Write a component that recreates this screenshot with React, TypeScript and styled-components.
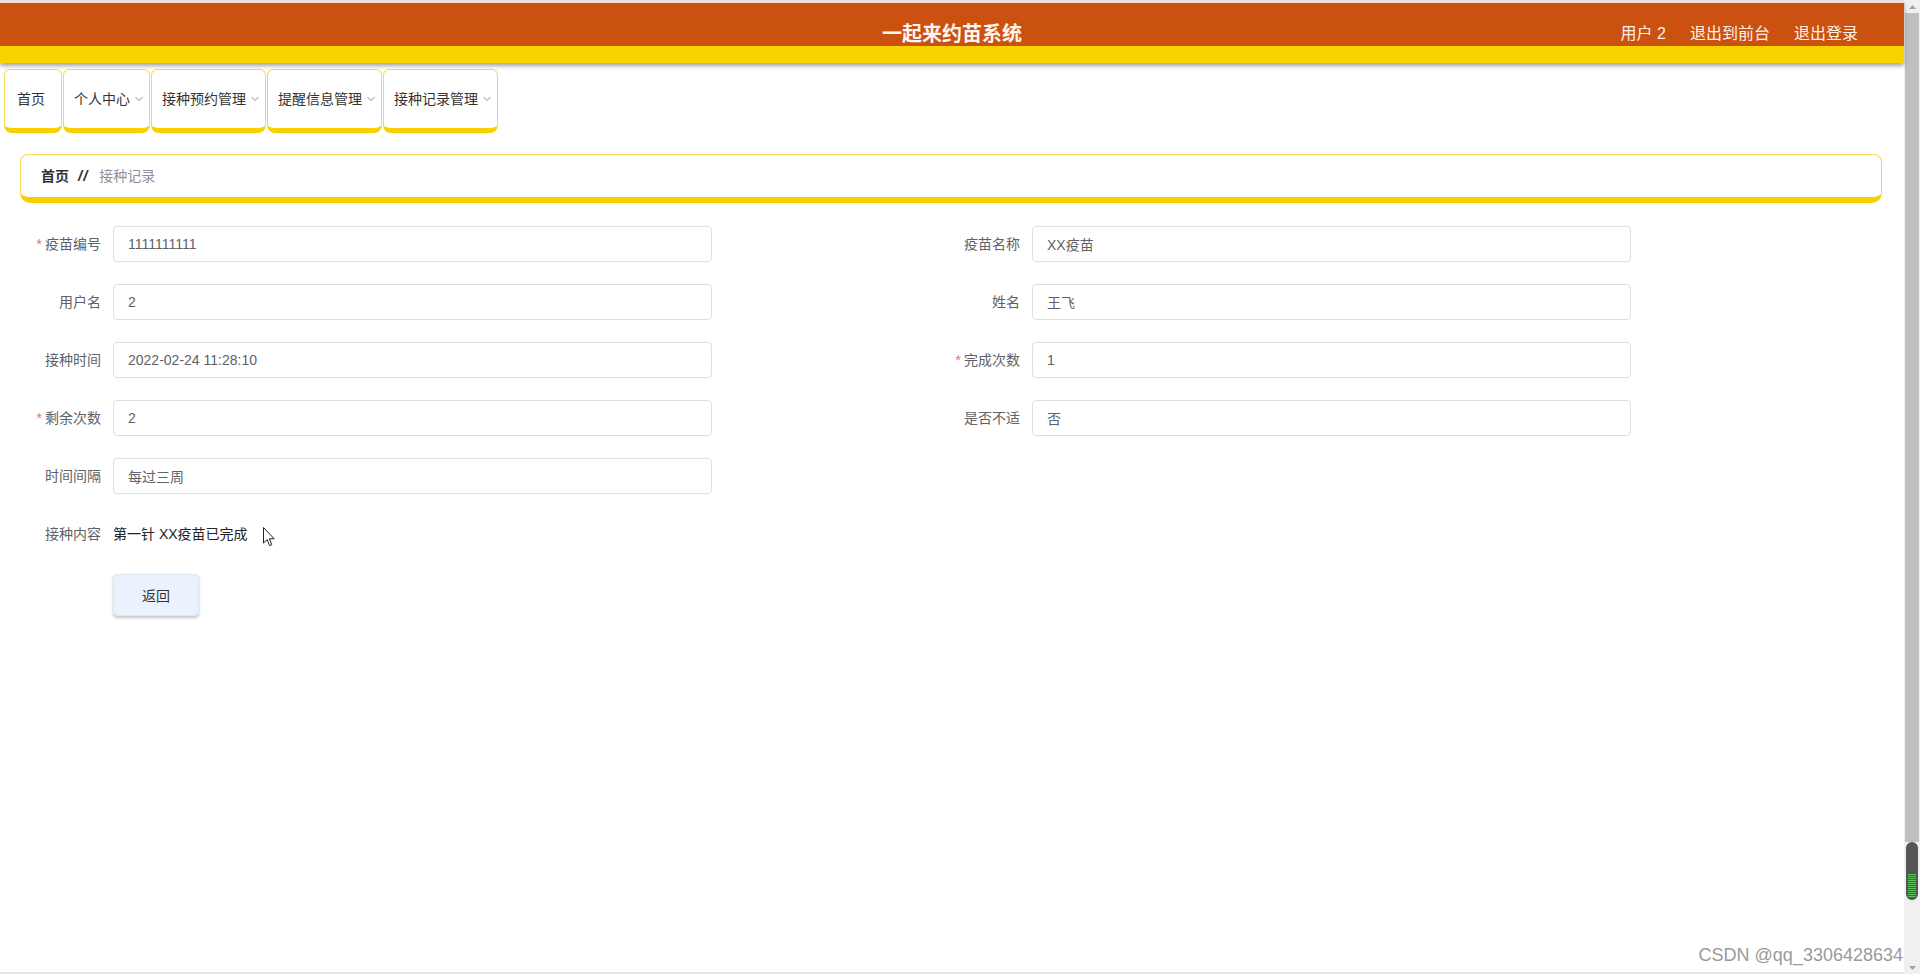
import React from "react";
import styled, { createGlobalStyle } from "styled-components";

const GlobalStyle = createGlobalStyle`
  html, body {
    margin: 0;
    padding: 0;
    background: #ffffff;
  }
  body {
    font-family: "Liberation Sans", "Noto Sans CJK SC", Arial, sans-serif;
    color: #333;
  }
  * { box-sizing: border-box; }
`;

const Shell = styled.div`
  display: flex;
  height: 100vh;
  overflow: hidden;
`;

const Main = styled.div`
  flex: 1;
  min-width: 0;
  display: flex;
  flex-direction: column;
  border-bottom: 2px solid #e4e4e4;
`;

const TopBar = styled.header`
  border-top: 3px solid #eadfd9;
  box-shadow: 0 3px 4px rgba(0, 0, 0, 0.35);
  position: relative;
  z-index: 1;
`;

const OrangeBar = styled.div`
  height: 43px;
  background: #ca5110;
  display: grid;
  grid-template-columns: 1fr auto 1fr;
  align-items: end;
  padding-bottom: 2px;
`;

const Title = styled.h1`
  grid-column: 2;
  margin: 0;
  font-size: 20px;
  line-height: 20px;
  font-weight: bold;
  color: #fff6f0;
`;

const UserLinks = styled.nav`
  grid-column: 3;
  justify-self: end;
  display: flex;
  gap: 24px;
  padding-right: 46px;
  font-size: 16px;
  line-height: 20px;
  color: #fff1e8;
`;

const UserLink = styled.span`
  white-space: pre;
`;

const YellowBar = styled.div`
  height: 17px;
  background: #fad200;
`;

const Menu = styled.div`
  display: flex;
  gap: 1px;
  padding: 6px 0 0 4px;
`;

const MenuItem = styled.div<{ $plain?: boolean }>`
  height: 64px;
  display: flex;
  align-items: center;
  gap: 5px;
  padding: ${(p) => (p.$plain ? "0 16px 0 12px" : "0 6px 0 10px")};
  background: #fff;
  border: 1px solid #f2d75a;
  border-bottom: 5px solid #f8d000;
  border-radius: 6px 6px 8px 8px;
  font-size: 14px;
  line-height: 20px;
  color: #333;
  white-space: nowrap;
`;

const Chevron = () => (
  <svg width="8" height="6" viewBox="0 0 8 6" fill="none">
    <polyline points="0.5,1 4,4.5 7.5,1" stroke="#8a8a8a" strokeWidth="1" />
  </svg>
);

const Crumbs = styled.div`
  margin: 21px 22px 0 20px;
  height: 49px;
  display: flex;
  align-items: center;
  padding-left: 20px;
  background: #fff;
  border: 1px solid #f2d75a;
  border-bottom: 6px solid #f8d000;
  border-radius: 8px 8px 10px 10px;
  font-size: 14px;
  line-height: 20px;
`;

const CrumbHome = styled.span`
  font-weight: bold;
  color: #303133;
`;

const CrumbSep = styled.span`
  font-weight: bold;
  font-style: italic;
  font-size: 15px;
  letter-spacing: 1px;
  color: #303133;
  margin: 0 11px 0 9px;
`;

const CrumbCurrent = styled.span`
  color: #8e9096;
`;

const Form = styled.div`
  margin-top: 23px;
  padding-left: 20px;
  display: grid;
  grid-template-columns: 919px 919px;
  row-gap: 22px;
`;

const Field = styled.div<{ $full?: boolean }>`
  display: flex;
  align-items: center;
  height: 36px;
  ${(p) => (p.$full ? "grid-column: 1 / -1;" : "")}
`;

const Label = styled.label`
  width: 93px;
  flex: none;
  padding-right: 12px;
  text-align: right;
  font-size: 14px;
  line-height: 36px;
  color: #606266;
  white-space: nowrap;
`;

const Star = styled.span`
  color: #f56c6c;
  margin-right: 3px;
`;

const TextBox = styled.input`
  width: 599px;
  height: 36px;
  padding: 0 14px;
  border: 1px solid #dcdfe6;
  border-radius: 4px;
  background: #fff;
  font-family: inherit;
  font-size: 14px;
  color: #606266;
  outline: none;
`;

const PlainValue = styled.span`
  font-size: 14px;
  line-height: 20px;
  color: #222;
`;

const Cursor = styled.svg`
  margin-left: 15px;
  margin-top: 6px;
`;

const Actions = styled.div`
  grid-column: 1 / -1;
  padding-left: 93px;
`;

const BackButton = styled.button`
  width: 86px;
  height: 42px;
  background: #eaf3fd;
  border: 1px solid #dde8f5;
  border-radius: 4px;
  box-shadow: 0 2px 3px rgba(0, 0, 0, 0.22);
  font-family: inherit;
  font-size: 14px;
  color: #333;
  cursor: pointer;
`;

const Watermark = styled.div`
  margin-top: auto;
  align-self: flex-end;
  margin-bottom: 7px;
  margin-right: 1px;
  font-family: "Liberation Sans", Arial, sans-serif;
  font-size: 18px;
  line-height: 20px;
  color: #9a9a9a;
  text-shadow: 0 0 1px #fff;
`;

const Rail = styled.div`
  width: 16px;
  flex: none;
  background: #f0f0f0;
  display: flex;
  flex-direction: column;
  align-items: stretch;
`;

const RailArrow = styled.div`
  height: 13px;
  flex: none;
  display: flex;
  align-items: center;
  justify-content: center;
`;

const RailTrack = styled.div`
  flex: none;
  height: 829px;
  margin: 0 1px;
  background: #bfbfbf;
`;

const RailThumb = styled.div`
  flex: none;
  height: 58px;
  margin: 0 2px;
  border-radius: 6px;
  background: #555;
  display: flex;
  flex-direction: column;
  justify-content: flex-end;
  align-items: center;
  gap: 1px;
  padding-bottom: 3px;
`;

const ThumbStripe = styled.div`
  width: 8px;
  height: 1px;
  background: #5cc15c;
`;

const RailSpacer = styled.div`
  flex: 1;
`;

const Triangle = ({ down }: { down?: boolean }) => (
  <svg width="7" height="4" viewBox="0 0 7 4">
    <polygon points={down ? "0,0 7,0 3.5,4" : "0,4 7,4 3.5,0"} fill="#a3a3a3" />
  </svg>
);

type FieldDef = { label: string; value: string; required?: boolean };

const fields: FieldDef[] = [
  { label: "疫苗编号", value: "1111111111", required: true },
  { label: "疫苗名称", value: "XX疫苗" },
  { label: "用户名", value: "2" },
  { label: "姓名", value: "王飞" },
  { label: "接种时间", value: "2022-02-24 11:28:10" },
  { label: "完成次数", value: "1", required: true },
  { label: "剩余次数", value: "2", required: true },
  { label: "是否不适", value: "否" },
  { label: "时间间隔", value: "每过三周" },
];

const menu = [
  { text: "首页", plain: true },
  { text: "个人中心" },
  { text: "接种预约管理" },
  { text: "提醒信息管理" },
  { text: "接种记录管理" },
];

export default function App() {
  return (
    <>
      <GlobalStyle />
      <Shell>
        <Main>
          <TopBar>
            <OrangeBar>
              <Title>一起来约苗系统</Title>
              <UserLinks>
                <UserLink>用户 2</UserLink>
                <UserLink>退出到前台</UserLink>
                <UserLink>退出登录</UserLink>
              </UserLinks>
            </OrangeBar>
            <YellowBar />
          </TopBar>

          <Menu>
            {menu.map((m) => (
              <MenuItem key={m.text} $plain={m.plain}>
                {m.text}
                {!m.plain && <Chevron />}
              </MenuItem>
            ))}
          </Menu>

          <Crumbs>
            <CrumbHome>首页</CrumbHome>
            <CrumbSep>//</CrumbSep>
            <CrumbCurrent>接种记录</CrumbCurrent>
          </Crumbs>

          <Form>
            {fields.map((f) => (
              <Field key={f.label}>
                <Label>
                  {f.required && <Star>*</Star>}
                  {f.label}
                </Label>
                <TextBox readOnly value={f.value} />
              </Field>
            ))}
            <Field $full>
              <Label>接种内容</Label>
              <PlainValue>第一针 XX疫苗已完成</PlainValue>
              <Cursor width="12" height="20" viewBox="0 0 12 20">
                <path
                  d="M0.5 0.5 L0.5 16 L4.2 12.6 L6.6 18.6 L8.8 17.7 L6.4 11.8 L11.2 11.8 Z"
                  fill="#fff"
                  stroke="#222"
                  strokeWidth="1"
                  strokeLinejoin="round"
                />
              </Cursor>
            </Field>
            <Actions>
              <BackButton type="button">返回</BackButton>
            </Actions>
          </Form>

          <Watermark>CSDN @qq_3306428634</Watermark>
        </Main>
        <Rail>
          <RailArrow>
            <Triangle />
          </RailArrow>
          <RailTrack />
          <RailThumb>
            {Array.from({ length: 12 }).map((_, i) => (
              <ThumbStripe key={i} />
            ))}
          </RailThumb>
          <RailSpacer />
          <RailArrow>
            <Triangle down />
          </RailArrow>
        </Rail>
      </Shell>
    </>
  );
}
